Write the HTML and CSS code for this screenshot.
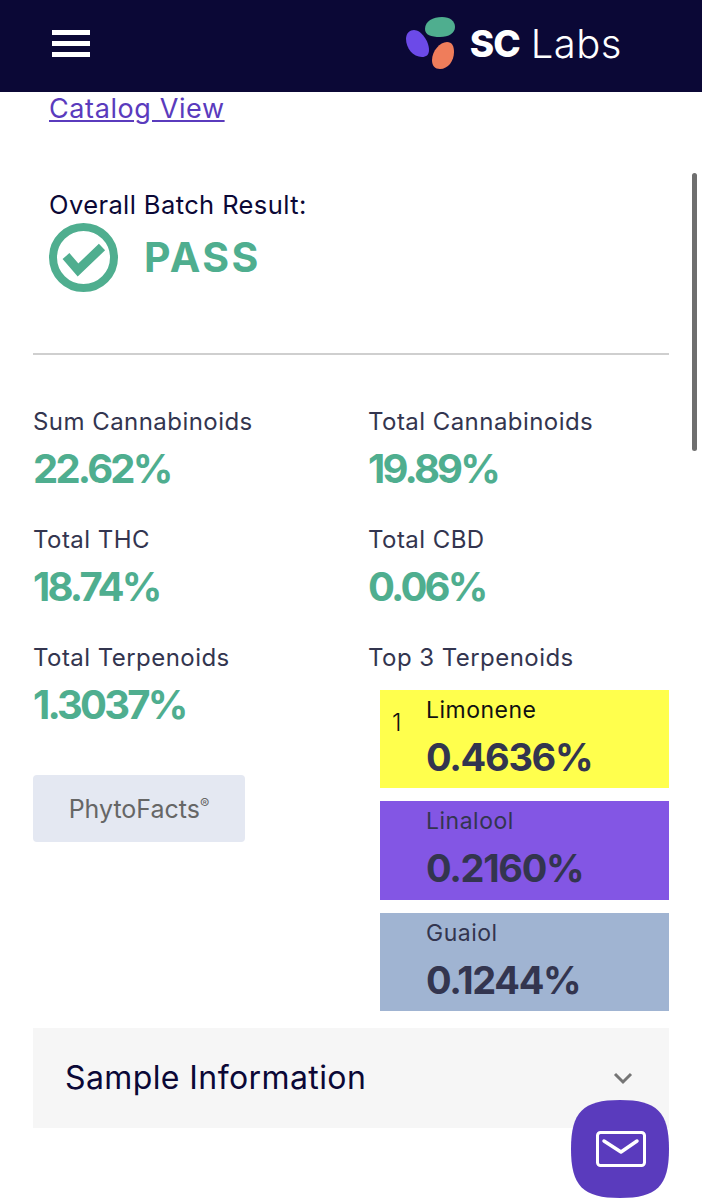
FILE: index.html
```html
<!DOCTYPE html>
<html lang="en">
<head>
  <meta charset="UTF-8" />
  <meta name="viewport" content="width=device-width, initial-scale=1.0" />
  <title>SC Labs Batch Result</title>
  <link rel="stylesheet" href="styles.css">
</head>
<body>
  <header class="topbar">
    <div class="hamburger"><span></span><span></span><span></span></div>
    <div class="logo">
      <svg class="logo-mark" width="52" height="56" viewBox="404 15 52 56">
        <path d="M425 29 C425 21 433 17 442 17 C450 17 455 21 455 27 C455 33 449 37 440 37 C431 37 425 35 425 29 Z" fill="#4fae8f"/>
        <path d="M406 39 C406 33 410 30 414 30 C421 30 429 41 429 50 C429 55 426 57 422 57 C413 57 406 48 406 39 Z" fill="#6c4ae8"/>
        <path d="M432 60 C432 51 440 42 447 42 C452 42 454 46 454 52 C454 61 448 69 440 69 C435 69 432 66 432 60 Z" fill="#ef7d5b"/>
      </svg>
      <span class="logo-sc">SC</span><span class="logo-labs">Labs</span>
    </div>
  </header>

  <main class="content">
    <a class="catalog-link" href="#">Catalog View</a>

    <section class="batch">
      <p class="batch-label">Overall Batch Result:</p>
      <div class="batch-result">
        <svg width="69" height="69" viewBox="0 0 69 69">
          <circle cx="34.5" cy="34.5" r="30.5" fill="none" stroke="#4fae8f" stroke-width="8"/>
          <path d="M17 33 L29 47 L53 24" fill="none" stroke="#4fae8f" stroke-width="9"/>
        </svg>
        <span class="batch-pass">PASS</span>
      </div>
    </section>

    <hr class="divider">

    <section class="stats">
      <div class="stat">
        <div class="stat-label">Sum Cannabinoids</div>
        <div class="stat-value">22.62%</div>
      </div>
      <div class="stat">
        <div class="stat-label">Total Cannabinoids</div>
        <div class="stat-value">19.89%</div>
      </div>
      <div class="stat">
        <div class="stat-label">Total THC</div>
        <div class="stat-value">18.74%</div>
      </div>
      <div class="stat">
        <div class="stat-label">Total CBD</div>
        <div class="stat-value">0.06%</div>
      </div>
      <div class="stat">
        <div class="stat-label">Total Terpenoids</div>
        <div class="stat-value">1.3037%</div>
        <button class="phyto-btn">PhytoFacts<sup>®</sup></button>
      </div>
      <div class="stat">
        <div class="stat-label">Top 3 Terpenoids</div>
        <div class="terp-list">
          <div class="terp terp-yellow">
            <span class="terp-rank">1</span>
            <div class="terp-name">Limonene</div>
            <div class="terp-value">0.4636%</div>
          </div>
          <div class="terp terp-purple">
            <div class="terp-name">Linalool</div>
            <div class="terp-value">0.2160%</div>
          </div>
          <div class="terp terp-blue">
            <div class="terp-name">Guaiol</div>
            <div class="terp-value">0.1244%</div>
          </div>
        </div>
      </div>
    </section>

    <section class="accordion">
      <h2>Sample Information</h2>
      <svg width="22" height="14" viewBox="0 0 22 14">
        <path d="M3 3 L11 11 L19 3" fill="none" stroke="#757575" stroke-width="3"/>
      </svg>
    </section>
  </main>

  <div class="scrollbar"></div>

  <button class="mail-btn">
    <svg width="98" height="98" viewBox="0 0 98 98">
      <path d="M49 0 C86 0 98 12 98 49 C98 86 86 98 49 98 C12 98 0 86 0 49 C0 12 12 0 49 0 Z" fill="#5a3bbd"/>
      <rect x="26.5" y="32.5" width="47" height="33" rx="3" fill="none" stroke="#fff" stroke-width="3"/>
      <path d="M33 41 L50 52 L66 41" fill="none" stroke="#fff" stroke-width="3.5" stroke-linecap="round" stroke-linejoin="round"/>
    </svg>
  </button>
</body>
</html>
```

FILE: styles.css
```css
:root {
  --navy: #0b0836;
  --green: #4fae8f;
  --violet: #5a3bbd;
  --slate: #33354f;
}

* {
  box-sizing: border-box;
}

body {
  margin: 0;
  height: 1200px;
  overflow: hidden;
  position: relative;
  background: #fff;
  font-family: 'Inter', 'Open Sans', sans-serif;
  color: var(--slate);
}

.topbar {
  height: 92px;
  background: var(--navy);
  display: flex;
  align-items: center;
  justify-content: space-between;
  padding: 0 80px 6px 52px;
}

.hamburger {
  display: flex;
  flex-direction: column;
  gap: 6px;
  width: 38px;
}

.hamburger span {
  height: 5px;
  background: #fff;
}

.logo {
  display: flex;
  align-items: center;
  color: #fff;
  font-size: 37px;
}

.logo-mark {
  margin-right: 14px;
}

.logo-sc {
  font-weight: 800;
  letter-spacing: -1px;
  margin-right: 11px;
}

.logo-labs {
  font-size: 40px;
  font-weight: 300;
  letter-spacing: 0.5px;
}

.content {
  padding: 0 33px;
}

.catalog-link {
  display: block;
  width: fit-content;
  margin: 1px 0 0 16px;
  font-size: 27px;
  letter-spacing: 0.6px;
  line-height: 32px;
  color: var(--violet);
}

.batch {
  margin: 63px 0 0 16px;
}

.batch-label {
  margin: 0;
  font-size: 25.5px;
  letter-spacing: 0.4px;
  line-height: 34px;
  color: var(--navy);
}

.batch-result {
  display: flex;
  align-items: center;
  gap: 26px;
  margin-top: 1px;
}

.batch-pass {
  padding-bottom: 2px;
  font-size: 41px;
  font-weight: 700;
  letter-spacing: 2.5px;
  color: var(--green);
}

.divider {
  margin: 61px 0 0;
  border: none;
  border-top: 2px solid #cfcfcf;
}

.stats {
  display: grid;
  grid-template-columns: 335px 301px;
  grid-template-rows: 118px 118px auto;
  margin-top: 50px;
}

.stat-label {
  margin-top: 1px;
  font-size: 24px;
  letter-spacing: 0.45px;
  line-height: 32px;
}

.stat-value {
  font-size: 40px;
  font-weight: 700;
  letter-spacing: -2.8px;
  line-height: 52px;
  margin-top: 5px;
  color: var(--green);
}

.phyto-btn {
  display: block;
  width: 212px;
  height: 67px;
  margin-top: 44px;
  border: none;
  border-radius: 4px;
  background: #e4e8f2;
  color: #666;
  font-family: inherit;
  font-size: 25px;
}

.phyto-btn sup {
  font-size: 14px;
}

.terp-list {
  display: flex;
  flex-direction: column;
  gap: 13px;
  margin: 16px 0 0 12px;
}

.terp {
  position: relative;
  height: 98.4px;
  padding: 4px 0 0 46px;
}

.terp-yellow {
  background: #ffff4d;
}

.terp-purple {
  background: #8356e4;
}

.terp-blue {
  background: #a0b4d2;
}

.terp-yellow .terp-name {
  color: #111;
}

.terp-rank {
  position: absolute;
  left: 12px;
  top: 18px;
  font-size: 24px;
  font-weight: 300;
  color: #111;
}

.terp-name {
  font-size: 23px;
  letter-spacing: 0.5px;
  line-height: 32px;
}

.terp-value {
  font-size: 38px;
  font-weight: 700;
  letter-spacing: -1.3px;
  line-height: 50px;
  margin-top: 6px;
}

.accordion {
  display: flex;
  align-items: center;
  justify-content: space-between;
  height: 100px;
  margin-top: 16.8px;
  padding: 0 35px 0 32px;
  background: #f6f6f6;
}

.accordion h2 {
  margin: 0;
  font-size: 32px;
  font-weight: 400;
  letter-spacing: 0.4px;
  color: var(--navy);
}

.scrollbar {
  position: absolute;
  left: 692px;
  top: 173px;
  width: 5px;
  height: 278px;
  border-radius: 3px;
  background: #6f6f6f;
}

.mail-btn {
  position: absolute;
  left: 571px;
  top: 1100px;
  width: 98px;
  height: 98px;
  padding: 0;
  border: none;
  background: none;
}

.mail-btn svg {
  display: block;
}
```
